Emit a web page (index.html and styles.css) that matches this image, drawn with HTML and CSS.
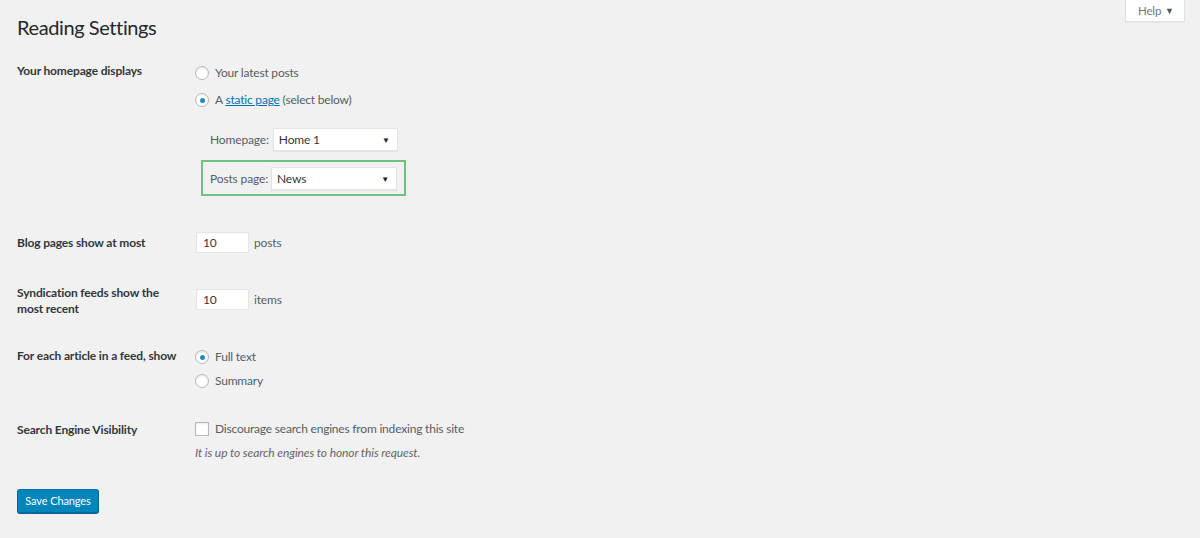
FILE: index.html
```html
<!DOCTYPE html>
<html>
<head>
<meta charset="utf-8">
<link rel="stylesheet" href="styles.css">
</head>
<body>
<div class="help-tab">Help <span class="caret">▼</span></div>
<div class="wrap">
  <h1 class="title">Reading Settings</h1>

  <div class="row row-home">
    <div class="label">Your homepage displays</div>
    <div class="field">
      <div class="opt"><span class="radio"></span>Your latest posts</div>
      <div class="opt opt-2"><span class="radio on"></span>A&nbsp;<a class="link" href="#">static page</a>&nbsp;(select below)</div>
      <div class="sel-row sel-home"><span class="sel-label">Homepage:</span><span class="select sel-a">Home 1<span class="arrow">▼</span></span></div>
      <div class="highlight"><span class="sel-label">Posts page:</span><span class="select sel-b">News<span class="arrow">▼</span></span></div>
    </div>
  </div>

  <div class="row row-blog">
    <div class="label lbl-blog">Blog pages show at most</div>
    <div class="field inline"><span class="num">10</span><span class="unit">posts</span></div>
  </div>

  <div class="row row-synd">
    <div class="label lbl-two">Syndication feeds show the<br>most recent</div>
    <div class="field inline synd-field"><span class="num">10</span><span class="unit">items</span></div>
  </div>

  <div class="row row-feed">
    <div class="label">For each article in a feed, show</div>
    <div class="field">
      <div class="opt opt-full"><span class="radio on"></span>Full text</div>
      <div class="opt opt-sum"><span class="radio"></span>Summary</div>
    </div>
  </div>

  <div class="row row-search">
    <div class="label">Search Engine Visibility</div>
    <div class="field">
      <div class="opt opt-check"><span class="check"></span>Discourage search engines from indexing this site</div>
      <div class="desc">It is up to search engines to honor this request.</div>
    </div>
  </div>

  <div class="actions"><button class="btn">Save Changes</button></div>
</div>
</body>
</html>
```
FILE: styles.css
```css
html, body {
  margin: 0;
  padding: 0;
  background: #f1f1f1;
}
body {
  font-family: Lato, "Open Sans", sans-serif;
  font-size: 12px;
  letter-spacing: -0.15px;
  color: #444;
  position: relative;
  height: 538px;
  overflow: hidden;
}
.help-tab {
  position: absolute;
  top: 0;
  left: 1125px;
  width: 60px;
  height: 22px;
  box-sizing: border-box;
  background: #fff;
  border: 1px solid #e1e1e1;
  border-top: none;
  box-shadow: 0 1px 1px rgba(0,0,0,.04);
  color: #72777c;
  font-size: 11.5px;
  line-height: 22px;
  padding-left: 12px;
  white-space: nowrap;
}
.help-tab .caret {
  font-size: 9px;
  margin-left: 1px;
  color: #50575e;
  vertical-align: 1px;
}
.wrap {
  padding: 0 17px;
}
.title {
  margin: 0;
  padding-top: 13px;
  font-size: 20px;
  letter-spacing: -0.4px;
  line-height: 29px;
  font-weight: 400;
  color: #23282d;
  height: 48px;
}
.row {
  display: grid;
  grid-template-columns: 178px 1fr;
}
.label {
  font-weight: 700;
  color: #32373c;
  font-size: 12px;
  line-height: 20px;
  white-space: nowrap;
}
.field {
  display: flex;
  flex-direction: column;
  align-items: flex-start;
}
.opt {
  display: flex;
  align-items: center;
  line-height: 20px;
  height: 20px;
  font-size: 12px;
  letter-spacing: -0.2px;
  color: #555d66;
  white-space: nowrap;
}
.row-home .field { padding-top: 2px; }
.opt-2 { margin-top: 7px; }
.radio {
  width: 14px;
  height: 14px;
  box-sizing: border-box;
  border: 1px solid #b4b9be;
  border-radius: 50%;
  background: #fff;
  box-shadow: inset 0 1px 2px rgba(0,0,0,.1);
  margin-right: 6px;
  display: flex;
  align-items: center;
  justify-content: center;
  flex: none;
}
.radio.on::after {
  content: "";
  width: 5px;
  height: 5px;
  border-radius: 50%;
  background: #1e8cbe;
}
.link {
  color: #0073aa;
  text-decoration: underline;
}
.sel-row {
  display: flex;
  align-items: center;
}
.sel-home {
  margin-top: 18px;
  margin-left: 15px;
}
.sel-label {
  color: #555d66;
  font-size: 12px;
  margin-right: 4px;
  white-space: nowrap;
}
.select {
  position: relative;
  display: block;
  box-sizing: border-box;
  height: 23px;
  line-height: 22px;
  background: #fff;
  border: 1px solid #e4e4e4;
  box-shadow: 0 1px 1px rgba(0,0,0,.05);
  color: #32373c;
  font-size: 12px;
  padding-left: 5px;
  flex: none;
}
.sel-a { width: 125px; }
.sel-b { width: 126px; height: 23px; }
.arrow {
  position: absolute;
  right: 7px;
  top: 0;
  font-size: 8px;
  color: #222;
}
.highlight {
  margin-top: 9px;
  margin-left: 6px;
  width: 205px;
  height: 36px;
  box-sizing: border-box;
  border: 2px solid #6ec27f;
  display: flex;
  align-items: center;
  padding-left: 7px;
}
.highlight .sel-label { margin-right: 3px; }
.row-blog { margin-top: 36px; }
.lbl-blog { padding-top: 1px; }
.inline {
  flex-direction: row;
  align-items: center;
  height: 21px;
}
.num {
  display: block;
  box-sizing: border-box;
  width: 53px;
  height: 21px;
  line-height: 20px;
  background: #fff;
  border: 1px solid #e6e6e6;
  box-shadow: inset 0 1px 2px rgba(0,0,0,.04);
  padding-left: 6px;
  color: #32373c;
  font-size: 12px;
  margin-left: 1px;
}
.unit {
  margin-left: 5px;
  color: #555d66;
  font-size: 12px;
}
.row-synd { margin-top: 32px; }
.lbl-two { line-height: 16px; }
.synd-field { margin-top: 4px; }
.row-feed { margin-top: 29px; }
.row-feed .field { padding-top: 1px; }
.opt-sum { margin-top: 4px; }
.row-search { margin-top: 29px; }
.opt-check { margin-top: -1px; }
.check {
  width: 14px;
  height: 14px;
  box-sizing: border-box;
  border: 1px solid #b4b9be;
  background: #fff;
  box-shadow: inset 0 1px 2px rgba(0,0,0,.1);
  margin-right: 6px;
  flex: none;
}
.desc {
  margin-top: 4px;
  line-height: 20px;
  font-style: italic;
  color: #666;
  font-size: 12px;
  letter-spacing: -0.1px;
}
.actions { margin-top: 26px; }
.btn {
  width: 82px;
  height: 24px;
  padding: 0;
  background: #0085ba;
  border: 1px solid;
  border-color: #0073aa #006799 #006799;
  border-radius: 3px;
  box-shadow: 0 1px 0 #006799;
  color: #fff;
  font-family: Lato, "Open Sans", sans-serif;
  font-size: 11px;
  letter-spacing: -0.1px;
  line-height: 22px;
  cursor: pointer;
}
```
